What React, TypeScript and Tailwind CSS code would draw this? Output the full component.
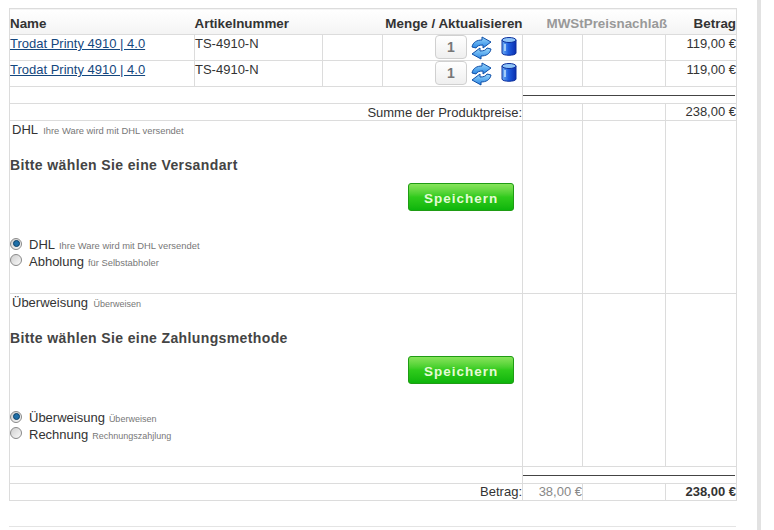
const line = 'border border-[#dcdcdc]'

function RefreshIcon() {
  return (
    <svg width="21" height="24" viewBox="0 0 21 24" className="shrink-0">
      <defs>
        <linearGradient id="refreshBlue" x1="0" y1="0" x2="0" y2="1">
          <stop offset="0" stopColor="#9ad8fc" />
          <stop offset="1" stopColor="#2a86e4" />
        </linearGradient>
      </defs>
      <path
        d="M11 1 L20 6 L12 12 L12 9 C8 9 6 10 5 12 L1 11 C2 6 6 4 11 4 Z"
        fill="url(#refreshBlue)"
        stroke="#0f4fa8"
        strokeWidth="1"
        strokeLinejoin="round"
      />
      <path
        d="M10 23 L1 18 L9 12 L9 15 C13 15 15 14 16 12 L20 13 C19 18 15 20 10 20 Z"
        fill="url(#refreshBlue)"
        stroke="#0f4fa8"
        strokeWidth="1"
        strokeLinejoin="round"
      />
    </svg>
  )
}

function TrashIcon() {
  return (
    <svg width="16" height="19" viewBox="0 0 16 19" className="shrink-0">
      <defs>
        <linearGradient id="canBlue" x1="0" y1="0" x2="1" y2="0">
          <stop offset="0" stopColor="#6fb0f5" />
          <stop offset="0.45" stopColor="#1f5fe0" />
          <stop offset="1" stopColor="#0a2fb0" />
        </linearGradient>
      </defs>
      <path d="M1 3 L1 16 C1 19 15 19 15 16 L15 3 Z" fill="url(#canBlue)" stroke="#0c2f9c" />
      <ellipse cx="8" cy="3" rx="7" ry="2.5" fill="#8fc4f8" stroke="#0c2f9c" />
      <rect x="3" y="7" width="2" height="7" fill="#b9dcfb" opacity="0.8" />
    </svg>
  )
}

function Radio({ checked }: { checked?: boolean }) {
  return (
    <span className="mb-[3px] flex h-[12px] w-[12px] shrink-0 items-center justify-center rounded-full border border-[#8a8a8a] bg-gradient-to-br from-[#cfcfcf] to-[#fafafa]">
      {checked && (
        <span className="h-[7px] w-[7px] rounded-full border border-[#0b3f66] bg-[#1f6fa8]" />
      )}
    </span>
  )
}

function Qty() {
  return (
    <div className="mb-[1px] flex h-[24px] w-[32px] items-center justify-center rounded-[4px] border border-[#d0d0d0] bg-gradient-to-b from-[#ffffff] to-[#efefef] text-[14px] font-bold text-[#777]">
      1
    </div>
  )
}

function ProductRow() {
  return (
    <tr>
      <td className={`${line} h-[26px] pb-[7px] align-middle`}>
        <a href="#" className="text-[#14477e] underline">
          Trodat Printy 4910 | 4.0
        </a>
      </td>
      <td className={`${line} pb-[7px] align-middle`}>TS-4910-N</td>
      <td className={line} />
      <td className={line}>
        <div className="flex items-center pl-[52px]">
          <Qty />
          <span className="ml-[4px]">
            <RefreshIcon />
          </span>
          <span className="mb-[2px] ml-[9px]">
            <TrashIcon />
          </span>
        </div>
      </td>
      <td className={line} />
      <td className={line} />
      <td className={`${line} whitespace-nowrap pb-[7px] text-right`}>119,00 €</td>
    </tr>
  )
}

function SpacerRow() {
  return (
    <tr>
      <td colSpan={4} className={`${line} h-[17px]`} />
      <td colSpan={3} className={`${line} pl-0`}>
        <div className="mr-[1px] border-t border-[#444]" />
      </td>
    </tr>
  )
}

function OptionCell({
  current,
  currentHint,
  title,
  hintClass,
  options,
}: {
  current: string
  currentHint: string
  title: string
  hintClass: string
  options: { name: string; hint: string; checked?: boolean }[]
}) {
  return (
    <>
      <td colSpan={4} className={`${line} h-[173px] align-top`}>
        <div className="flex h-[172px] flex-col">
          <div className="pl-[2px] pt-[1px] leading-[16px]">
            {current} <span className={`ml-[2px] text-[#777] ${hintClass}`}>{currentHint}</span>
          </div>
          <h3 className="mt-[18px] text-[14px] font-bold leading-[16px] tracking-[0.38px] text-[#444]">
            {title}
          </h3>
          <div className="mt-[10px] flex justify-end pr-[8px]">
            <button className="h-[28px] w-[106px] rounded-[3px] border border-[#1f9c14] bg-gradient-to-b from-[#86e45a] via-[#2fcb1c] to-[#0bb50b] pt-[3px] text-[13.5px] font-bold tracking-[1px] text-[#e4fbd6]">
              Speichern
            </button>
          </div>
          <div className="mt-[26px] flex flex-col">
            {options.map((o) => (
              <div key={o.name} className="flex h-[16.5px] items-center">
                <Radio checked={o.checked} />
                <span className="ml-[7px]">{o.name}</span>
                <span className={`ml-[4px] pt-[2px] text-[#777] ${hintClass}`}>{o.hint}</span>
              </div>
            ))}
          </div>
        </div>
      </td>
      <td className={line} />
      <td className={line} />
      <td className={line} />
    </>
  )
}

export default function App() {
  return (
    <div className="h-[530px] w-[761px] overflow-hidden border-r-[4px] border-[#e2e2e2] bg-white pl-[9px] pt-[8px] font-['Liberation_Sans',Arial,sans-serif] text-[13px] leading-[14px] text-[#333]">
      <table className="w-[727px] table-fixed border-collapse">
        <colgroup>
          <col className="w-[185px]" />
          <col className="w-[128px]" />
          <col className="w-[60px]" />
          <col className="w-[140px]" />
          <col className="w-[60px]" />
          <col className="w-[83px]" />
          <col className="w-[71px]" />
        </colgroup>
        <thead>
          <tr className="h-[26px] border border-[#dcdcdc] bg-gradient-to-b from-[#ffffff] to-[#f4f4f4] text-[13.4px] font-bold">
            <th className="pt-[4px] text-left">Name</th>
            <th className="pt-[4px] text-left">Artikelnummer</th>
            <th colSpan={2} className="whitespace-nowrap pt-[4px] text-right">
              Menge / Aktualisieren
            </th>
            <th colSpan={2} className="whitespace-nowrap pl-[24px] pt-[4px] text-left text-[#999]">
              MWStPreisnachlaß
            </th>
            <th className="whitespace-nowrap pt-[4px] text-right">Betrag</th>
          </tr>
        </thead>
        <tbody>
          <ProductRow />
          <ProductRow />
          <SpacerRow />
          <tr>
            <td colSpan={4} className={`${line} h-[17px] whitespace-nowrap pt-[1px] text-right`}>
              Summe der Produktpreise:
            </td>
            <td className={line} />
            <td className={line} />
            <td className={`${line} text-right`}>238,00 €</td>
          </tr>
          <tr>
            <OptionCell
              current="DHL"
              currentHint="Ihre Ware wird mit DHL versendet"
              title="Bitte wählen Sie eine Versandart"
              hintClass="text-[9.4px]"
              options={[
                { name: 'DHL', hint: 'Ihre Ware wird mit DHL versendet', checked: true },
                { name: 'Abholung', hint: 'für Selbstabholer' },
              ]}
            />
          </tr>
          <tr>
            <OptionCell
              current="Überweisung"
              currentHint="Überweisen"
              title="Bitte wählen Sie eine Zahlungsmethode"
              hintClass="text-[9px]"
              options={[
                { name: 'Überweisung', hint: 'Überweisen', checked: true },
                { name: 'Rechnung', hint: 'Rechnungszahjlung' },
              ]}
            />
          </tr>
          <SpacerRow />
          <tr>
            <td colSpan={4} className={`${line} h-[17px] text-right`}>
              Betrag:
            </td>
            <td className={`${line} whitespace-nowrap text-right text-[#888]`}>38,00 €</td>
            <td className={line} />
            <td className={`${line} whitespace-nowrap text-right font-bold`}>238,00 €</td>
          </tr>
        </tbody>
      </table>
      <div className="mt-[25px] w-[727px] border-t border-[#e4e4e4]" />
    </div>
  )
}
